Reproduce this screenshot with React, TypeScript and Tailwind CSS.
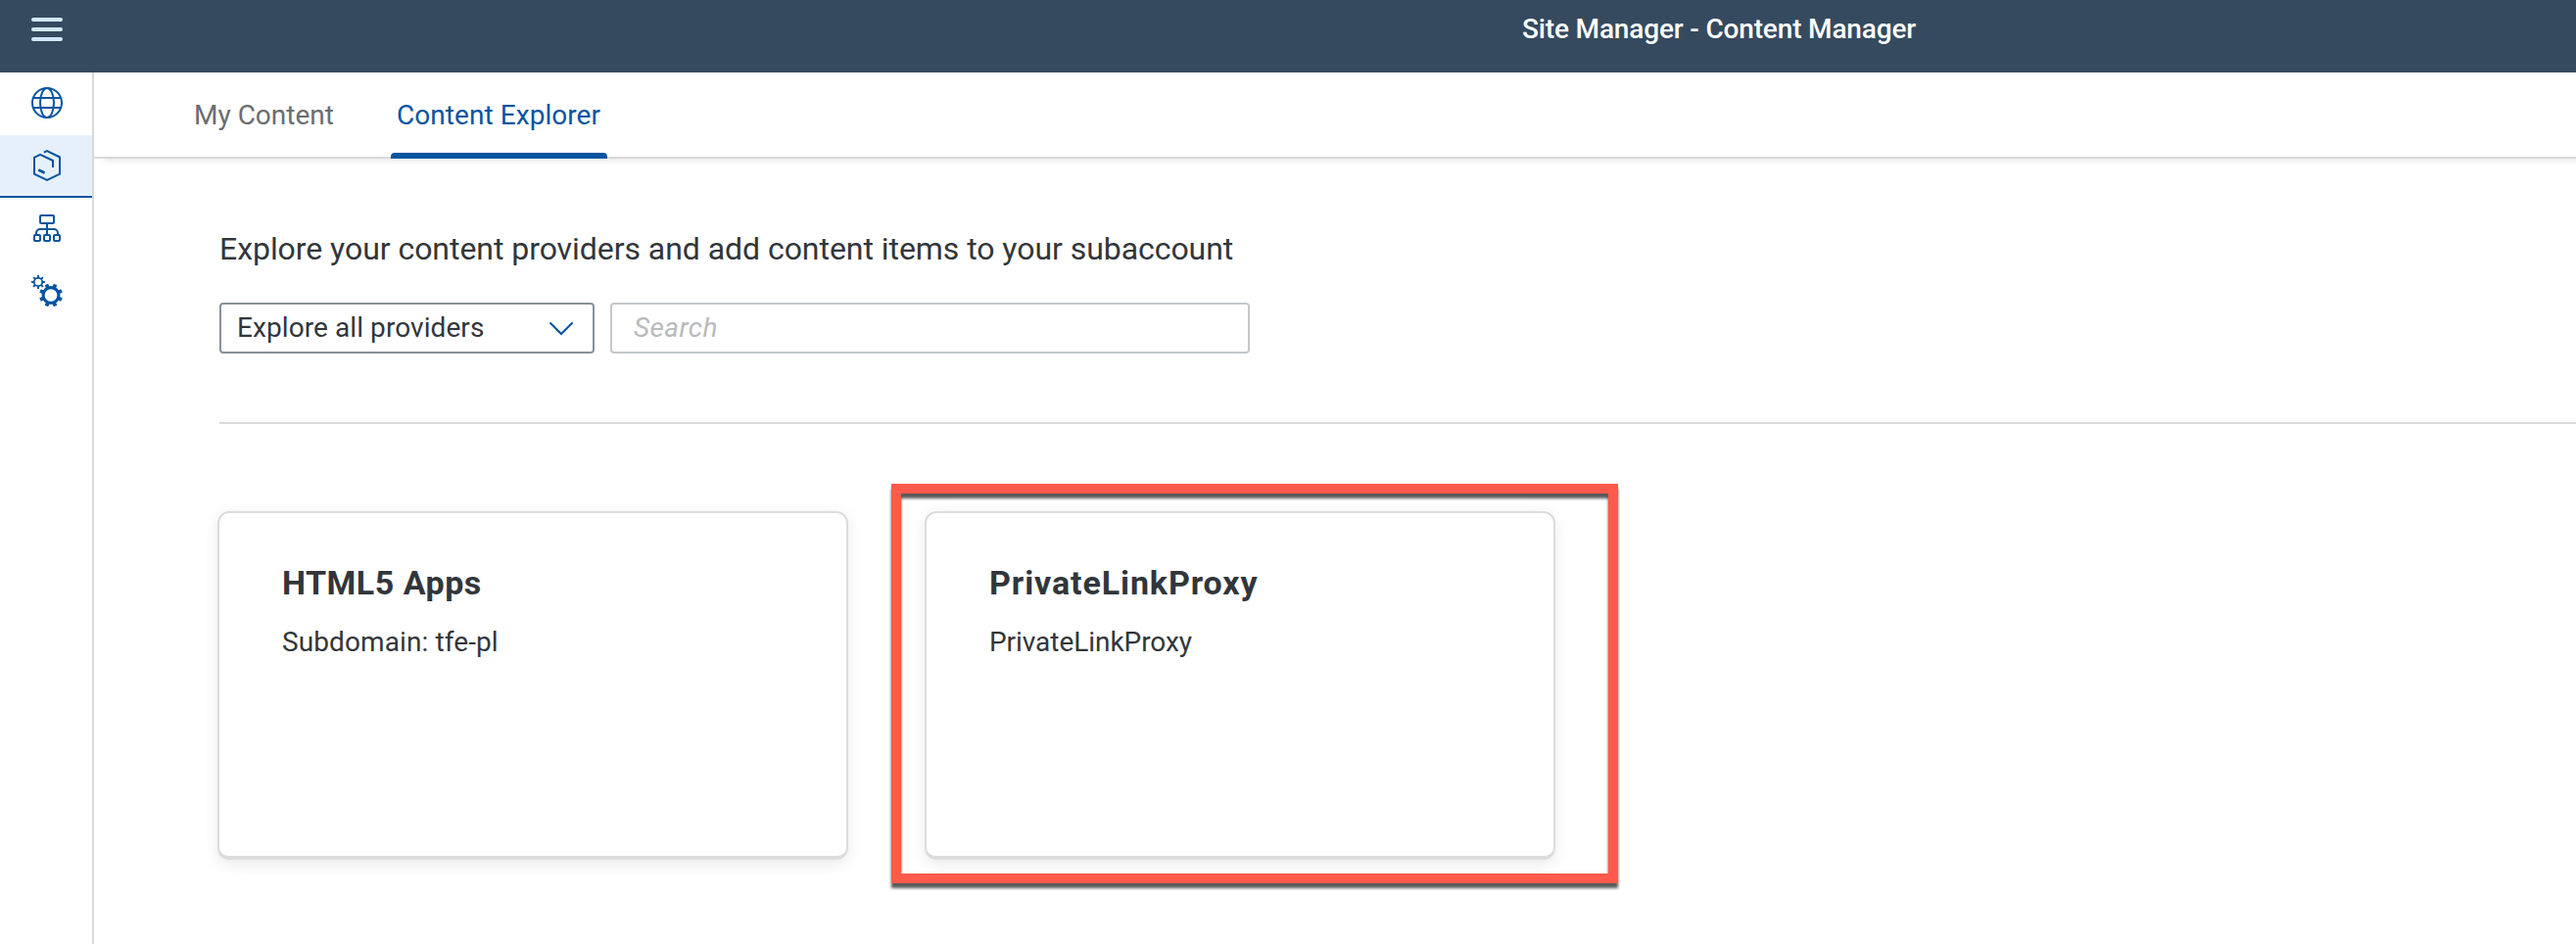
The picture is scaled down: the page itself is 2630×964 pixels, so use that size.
import type { ReactNode } from "react";

const BIG_TEETH = [22.5, 67.5, 112.5, 157.5, 202.5, 247.5, 292.5, 337.5];
const SMALL_TEETH = [0, 45, 90, 135, 180, 225, 270, 315];

function Icon({ children }: { children: ReactNode }) {
  return (
    <svg width="32" height="32" viewBox="0 0 32 32" fill="none" stroke="#0854a0" strokeWidth="2">
      {children}
    </svg>
  );
}

function GlobeIcon() {
  return (
    <Icon>
      <circle cx="16" cy="16" r="15" />
      <ellipse cx="16" cy="16" rx="7" ry="15" />
      <path d="M2 11h28M2 21h28" />
    </Icon>
  );
}

function ContentIcon() {
  return (
    <Icon>
      <path d="M12.8 2.6 16 1.2 29 7.5v17.2L16 30.8 3 24.7V7.9L9 4.9 22 11v7" />
      <path d="M7.2 20.4 13.6 23.4" strokeWidth="2.8" />
    </Icon>
  );
}

function HierarchyIcon() {
  return (
    <Icon>
      <rect x="9" y="3" width="14" height="8" rx="1" />
      <path d="M16 11v12M5 23v-2a4 4 0 0 1 4-4h14a4 4 0 0 1 4 4v2" strokeLinejoin="round" />
      <rect x="3" y="23" width="6" height="6" rx="1" fill="#fff" />
      <rect x="13" y="23" width="6" height="6" rx="1" fill="#fff" />
      <rect x="23" y="23" width="6" height="6" rx="1" fill="#fff" />
    </Icon>
  );
}

function GearsIcon() {
  return (
    <Icon>
      <circle cx="7" cy="7" r="4.2" strokeWidth="1.8" />
      {SMALL_TEETH.map((a) => (
        <path key={a} d="M7 2.6V0" strokeWidth="1.9" transform={`rotate(${a} 7 7)`} />
      ))}
      <circle cx="20" cy="20.5" r="7.9" strokeWidth="3.1" />
      {BIG_TEETH.map((a) => (
        <path key={a} d="M20 12.4V8.6" strokeWidth="3.8" transform={`rotate(${a} 20 20.5)`} />
      ))}
    </Icon>
  );
}

function NavItem({ active = false, children }: { active?: boolean; children: ReactNode }) {
  return (
    <button
      className={
        active
          ? "flex h-16 w-full items-center justify-center border-b-2 border-[#0854a0] bg-[#e5f0fa] pl-0.5"
          : "flex h-16 w-full items-center justify-center pb-0.5 pl-0.5"
      }
    >
      {children}
    </button>
  );
}

function ProviderCard({ title, titleClass, text, textClass }: { title: string; titleClass: string; text: string; textClass: string }) {
  return (
    <article className="h-[356px] w-[644px] rounded-xl border-2 border-b-4 border-[#dcdcdc] bg-white pt-[51px] pl-[64px] shadow-[0_4px_16px_rgba(0,0,0,0.09)]">
      <h2 className={`text-[34px] leading-10 font-bold ${titleClass}`}>{title}</h2>
      <p className={`mt-[21px] text-[28px] leading-10 ${textClass}`}>{text}</p>
    </article>
  );
}

export default function App() {
  return (
    <div className="flex h-[964px] w-full flex-col overflow-hidden bg-white font-['Roboto',sans-serif] text-[#32363a]">
      <header className="flex h-[74px] shrink-0 items-start bg-[#354a5f]">
        <button className="mt-[18px] ml-8 flex w-8 flex-col gap-1.5">
          <span className="h-1 w-full rounded-full bg-[#d1e8ff]" />
          <span className="h-1 w-full rounded-full bg-[#d1e8ff]" />
          <span className="h-1 w-full rounded-full bg-[#d1e8ff]" />
        </button>
        <h1 className="mt-[10px] ml-[1490px] text-[28px] leading-10 font-medium tracking-[-0.16px] whitespace-nowrap text-white">
          Site Manager - Content Manager
        </h1>
      </header>

      <div className="flex min-h-0 flex-1">
        <nav className="w-24 shrink-0 border-r-2 border-[#d9d9d9]">
          <NavItem><GlobeIcon /></NavItem>
          <NavItem active><ContentIcon /></NavItem>
          <NavItem><HierarchyIcon /></NavItem>
          <NavItem><GearsIcon /></NavItem>
        </nav>

        <main className="min-w-0 flex-1">
          <div className="flex h-[88px] border-b-2 border-[#d9d9d9] pl-[102px] text-[28px] leading-10 shadow-[8px_4px_6px_-2px_rgba(0,0,0,0.1)]">
            <button className="mt-6 h-10 w-[144px] text-left whitespace-nowrap text-[#6a6d70]">My Content</button>
            <button className="ml-[57px] flex h-[88px] w-[221px] flex-col items-start justify-between pt-6 text-[#0854a0]">
              <span className="pl-1.5 tracking-[0.06px] whitespace-nowrap">Content Explorer</span>
              <span className="h-1.5 w-full rounded-t bg-[#0854a0]" />
            </button>
          </div>

          <section className="pl-32">
            <p className="pt-[72px] text-[32px] leading-10 tracking-[-0.05px] whitespace-nowrap">
              Explore your content providers and add content items to your subaccount
            </p>
            <div className="mt-[35px] flex gap-4 text-[28px] leading-10">
              <button className="flex h-[52px] w-[383px] items-center justify-between rounded border-2 border-[#89919a] pr-[19px] pl-4">
                <span className="tracking-[0.08px]">Explore all providers</span>
                <svg width="26" height="16" viewBox="0 0 26 16" fill="none" stroke="#0854a0" strokeWidth="2" strokeLinecap="round">
                  <path d="m2 3 11 11L24 3" />
                </svg>
              </button>
              <div className="flex h-[52px] w-[653px] items-center rounded border-2 border-[#c4c8cc] pl-[22px] text-[#b8babc] italic">
                <span className="tracking-[0.4px]">Search</span>
              </div>
            </div>
            <hr className="mt-[70px] border-t-2 border-[#d9d9d9]" />
            <div className="mt-[89px] -ml-0.5 flex gap-[78px]">
              <ProviderCard title="HTML5 Apps" titleClass="tracking-[0.5px]" text="Subdomain: tfe-pl" textClass="tracking-[0.1px]" />
              <div className="relative">
                <ProviderCard title="PrivateLinkProxy" titleClass="tracking-[0.9px]" text="PrivateLinkProxy" textClass="tracking-[-0.05px]" />
                <div className="pointer-events-none absolute -top-7 -left-[34px] h-[408px] w-[742px] border-10 border-[#ff5a4b] drop-shadow-[0_5px_1.5px_rgba(0,0,0,0.65)]" />
              </div>
            </div>
          </section>
        </main>
      </div>
    </div>
  );
}
